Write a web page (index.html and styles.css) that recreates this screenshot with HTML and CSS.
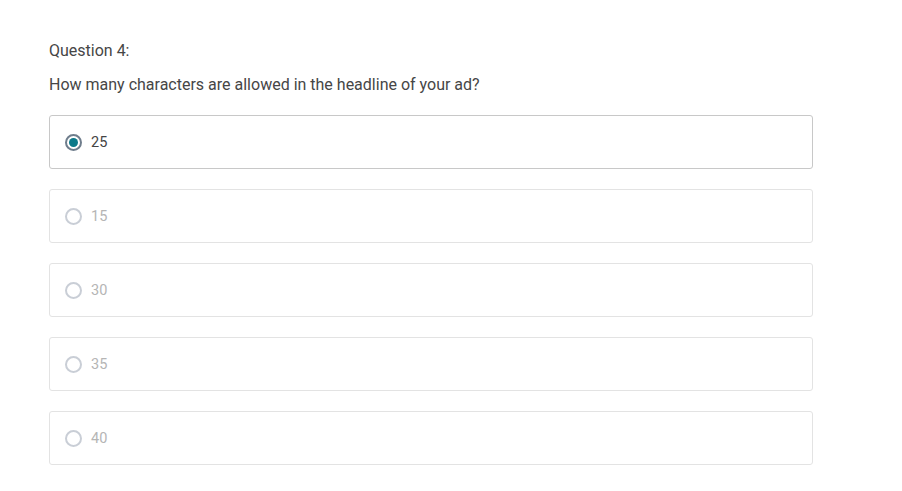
FILE: index.html
```html
<!DOCTYPE html>
<html>
<head>
<meta charset="utf-8">
<link rel="stylesheet" href="styles.css">
</head>
<body>
<div class="quiz">
  <div class="q-label">Question 4:</div>
  <div class="q-text">How many characters are allowed in the headline of your ad?</div>
  <div class="options">
    <label class="option selected"><span class="radio"><span class="dot"></span></span><span class="opt-text">25</span></label>
    <label class="option"><span class="radio"></span><span class="opt-text">15</span></label>
    <label class="option"><span class="radio"></span><span class="opt-text">30</span></label>
    <label class="option"><span class="radio"></span><span class="opt-text">35</span></label>
    <label class="option"><span class="radio"></span><span class="opt-text">40</span></label>
  </div>
</div>
</body>
</html>
```
FILE: styles.css
```css
html, body {
  margin: 0;
  padding: 0;
  background: #ffffff;
}
body {
  font-family: Roboto, "Liberation Sans", sans-serif;
  color: #444;
}
.quiz {
  padding: 42px 0 0 49px;
  width: 764px;
}
.q-label {
  font-size: 16px;
  line-height: 18px;
  color: #464646;
}
.q-text {
  margin-top: 15px;
  font-size: 16px;
  line-height: 20px;
  color: #464646;
}
.options {
  margin-top: 20px;
  display: flex;
  flex-direction: column;
  gap: 20px;
}
.option {
  box-sizing: border-box;
  height: 54px;
  border: 1px solid #e3e3e3;
  border-radius: 3px;
  display: flex;
  align-items: center;
  padding-left: 15px;
}
.option.selected {
  border-color: #c8c8c8;
}
.radio {
  box-sizing: border-box;
  width: 17px;
  height: 17px;
  border-radius: 50%;
  border: 2px solid #c9ced6;
  display: flex;
  align-items: center;
  justify-content: center;
}
.selected .radio {
  border-color: #6f7d8c;
}
.dot {
  width: 9px;
  height: 9px;
  border-radius: 50%;
  background: #0d7a8a;
}
.opt-text {
  margin-left: 9px;
  font-size: 14.5px;
  color: #b5b5b5;
}
.selected .opt-text {
  color: #444;
}
```
